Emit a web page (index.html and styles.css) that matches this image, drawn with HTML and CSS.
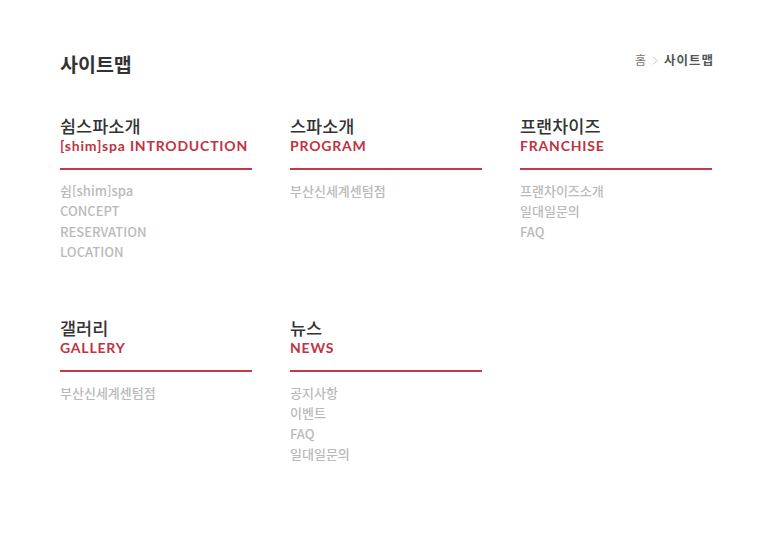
FILE: index.html
```html
<!DOCTYPE html>
<html lang="ko">
<head>
    <meta charset="UTF-8">
    <meta name="viewport" content="width=device-width, initial-scale=1.0">
    <title>사이트맵</title>
    <link rel="stylesheet" href="styles.css">
</head>
<body>
    <div class="sitemap">
        <div class="page-head">
            <h1>사이트맵</h1>
            <div class="breadcrumb">
                <span class="home">홈</span>
                <svg class="arrow" width="6" height="9" viewBox="0 0 6 9"><path d="M1 0.5 L5 4.5 L1 8.5" fill="none" stroke="#c4c4c4" stroke-width="1"/></svg>
                <span class="current">사이트맵</span>
            </div>
        </div>

        <div class="map-grid">
            <div class="map-section">
                <div class="section-title">
                    <h2>쉼스파소개</h2>
                    <p class="en">[shim]spa INTRODUCTION</p>
                </div>
                <ul>
                    <li>쉼[shim]spa</li>
                    <li>CONCEPT</li>
                    <li>RESERVATION</li>
                    <li>LOCATION</li>
                </ul>
            </div>

            <div class="map-section">
                <div class="section-title">
                    <h2>스파소개</h2>
                    <p class="en">PROGRAM</p>
                </div>
                <ul>
                    <li>부산신세계센텀점</li>
                </ul>
            </div>

            <div class="map-section">
                <div class="section-title">
                    <h2>프랜차이즈</h2>
                    <p class="en">FRANCHISE</p>
                </div>
                <ul>
                    <li>프랜차이즈소개</li>
                    <li>일대일문의</li>
                    <li>FAQ</li>
                </ul>
            </div>

            <div class="map-section">
                <div class="section-title">
                    <h2>갤러리</h2>
                    <p class="en">GALLERY</p>
                </div>
                <ul>
                    <li>부산신세계센텀점</li>
                </ul>
            </div>

            <div class="map-section">
                <div class="section-title">
                    <h2>뉴스</h2>
                    <p class="en">NEWS</p>
                </div>
                <ul>
                    <li>공지사항</li>
                    <li>이벤트</li>
                    <li>FAQ</li>
                    <li>일대일문의</li>
                </ul>
            </div>
        </div>
    </div>
</body>
</html>
```

FILE: styles.css
```css
* {
    margin: 0;
    padding: 0;
    box-sizing: border-box;
}

body {
    font-family: 'Noto Sans CJK KR', 'Noto Sans', sans-serif;
    background-color: #fff;
    color: #333;
}

.sitemap {
    width: 774px;
    padding: 51px 60px 0 60px;
}

.page-head {
    display: flex;
    justify-content: space-between;
    align-items: flex-start;
    margin-bottom: 39px;
}

.page-head h1 {
    font-size: 19.5px;
    line-height: 26px;
    font-weight: 700;
    color: #333;
}

.breadcrumb {
    display: flex;
    align-items: center;
    gap: 6px;
    font-size: 12px;
    line-height: 18px;
}

.breadcrumb .home {
    color: #777;
}

.breadcrumb .arrow {
    display: block;
}

.breadcrumb .current {
    color: #555;
    font-weight: 700;
    font-size: 12.5px;
    letter-spacing: 1px;
}

.map-grid {
    display: grid;
    grid-template-columns: repeat(3, 192px);
    grid-auto-rows: 202px;
    column-gap: 38px;
}

.section-title {
    border-bottom: 2px solid #c23a47;
    padding-bottom: 12px;
}

.section-title h2 {
    font-size: 17.5px;
    line-height: 20px;
    font-weight: 500;
    color: #333;
}

.section-title .en {
    font-family: Lato, 'Noto Sans', sans-serif;
    font-size: 14px;
    line-height: 20px;
    font-weight: 700;
    letter-spacing: 0.8px;
    color: #c2323f;
}

.map-section ul {
    list-style: none;
    margin-top: 11px;
}

.map-section li {
    font-size: 13px;
    line-height: 20.4px;
    color: #bababa;
    font-weight: 500;
}
```
